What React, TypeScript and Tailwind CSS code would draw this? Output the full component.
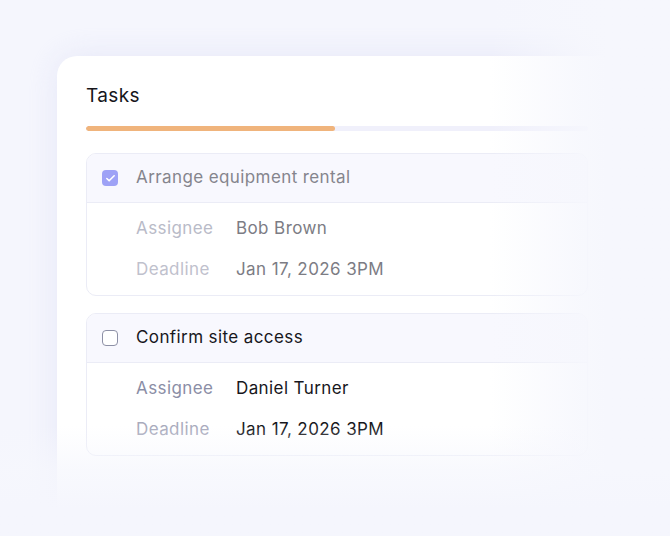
import { Check } from 'lucide-react';

type Task = {
  title: string;
  assignee: string;
  deadline: string;
  done: boolean;
};

const tasks: Task[] = [
  { title: 'Arrange equipment rental', assignee: 'Bob Brown', deadline: 'Jan 17, 2026 3PM', done: true },
  { title: 'Confirm site access', assignee: 'Daniel Turner', deadline: 'Jan 17, 2026 3PM', done: false },
];

function TaskCard({ task }: { task: Task }) {
  const done = task.done;
  return (
    <div className="rounded-[10px] border border-[#ebecf6] bg-white overflow-hidden">
      <div className="h-[49px] flex items-center gap-[18px] pl-[15px] bg-[#f8f8fe] border-b border-[#ebecf6]">
        {done ? (
          <div className="w-4 h-4 rounded-[4px] bg-[#9ea2f6] flex items-center justify-center">
            <Check className="w-[11px] h-[11px] text-white" strokeWidth={3.5} />
          </div>
        ) : (
          <div className="w-4 h-4 rounded-[4px] border-[1.5px] border-[#8d90a6] bg-white" />
        )}
        <span className={`text-[17px] tracking-[0.4px] ${done ? 'text-[#85858d]' : 'text-[#17171c]'}`}>{task.title}</span>
      </div>
      <div className="py-[5px] pl-[49px] text-[17px] tracking-[0.4px]">
        <div className="h-[41px] flex items-center">
          <span className={`w-[100px] ${done ? 'text-[#b9bbc8]' : 'text-[#8b8ea6]'}`}>Assignee</span>
          <span className={done ? 'text-[#7c7c84]' : 'text-[#17171c]'}>{task.assignee}</span>
        </div>
        <div className="h-[41px] flex items-center">
          <span className={`w-[100px] ${done ? 'text-[#bfc1cd]' : 'text-[#a9abbd]'}`}>Deadline</span>
          <span className={done ? 'text-[#7c7c84]' : 'text-[#17171c]'}>{task.deadline}</span>
        </div>
      </div>
    </div>
  );
}

export default function App() {
  return (
    <div
      className="relative w-[670px] h-[536px] overflow-hidden bg-[#f5f6fd] pt-[56px] pl-[57px]"
      style={{ fontFamily: 'Inter, "Noto Sans", sans-serif' }}
    >
      <div className="w-[560px] h-[520px] rounded-[20px] bg-white px-[29px] pt-[26px] shadow-[0_0_30px_rgba(220,222,245,0.6)]">
        <h2 className="text-[19px] leading-[28px] tracking-[0.4px] text-[#16161b]">Tasks</h2>
        <div className="mt-[16px] h-[5px] rounded-full bg-[#f0f0fb] overflow-hidden">
          <div className="h-full w-[249px] rounded-full bg-[#f0b47c]" />
        </div>
        <div className="mt-[22px] flex flex-col gap-[17px]">
          {tasks.map((t) => (
            <TaskCard key={t.title} task={t} />
          ))}
        </div>
      </div>
      {/* fades over the card edges */}
      <div className="absolute top-0 right-0 h-full w-[180px] bg-gradient-to-r from-[#f5f6fd]/0 via-[#f6f7fd]/85 via-50% to-[#f6f7fd] to-65%" />
      <div className="absolute bottom-0 left-0 w-full h-[110px] bg-gradient-to-b from-[#f5f6fd]/0 via-[#f6f7fd]/75 via-40% to-[#f5f6fd] to-75%" />
    </div>
  );
}
